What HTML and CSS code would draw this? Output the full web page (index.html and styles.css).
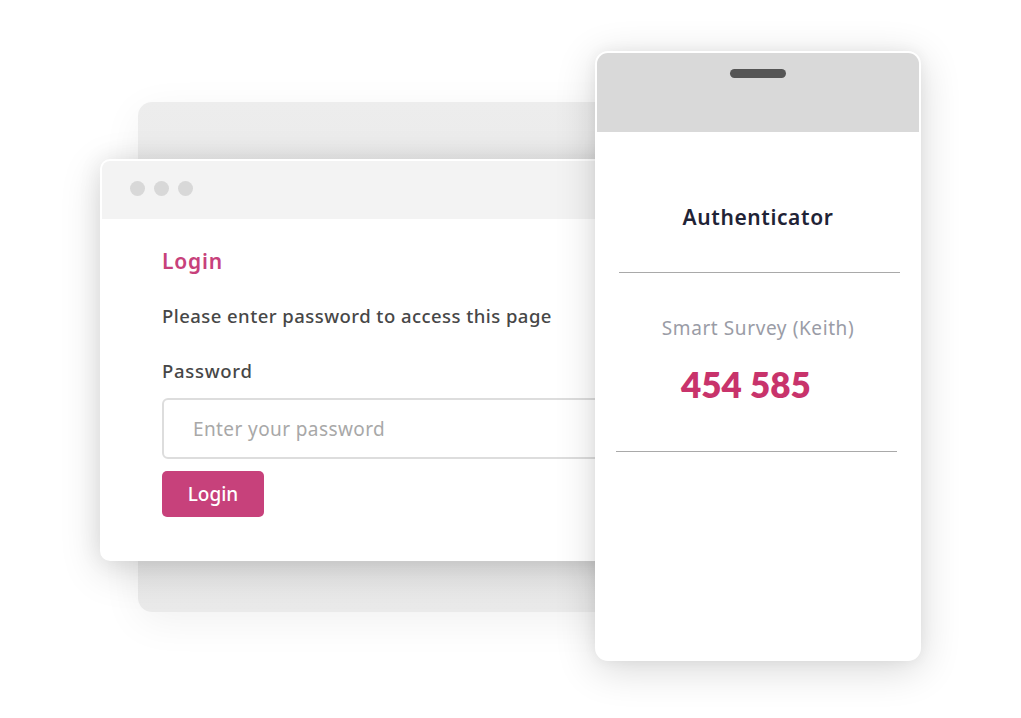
FILE: index.html
```html
<!DOCTYPE html>
<html>
<head>
<meta charset="utf-8">
<link rel="stylesheet" href="styles.css">
</head>
<body>
<div class="stage">
  <div class="back-card"></div>
  <div class="browser">
    <div class="browser-bar">
      <span class="dot"></span><span class="dot"></span><span class="dot"></span>
    </div>
    <div class="browser-body">
      <h1 class="login-title">Login</h1>
      <p class="prompt">Please enter password to access this page</p>
      <label class="field-label">Password</label>
      <div class="input">Enter your password</div>
      <div class="btn">Login</div>
    </div>
  </div>
  <div class="phone">
    <div class="phone-top"><span class="notch"></span></div>
    <div class="phone-body">
      <h2 class="auth-title">Authenticator</h2>
      <hr class="rule rule-a">
      <p class="account">Smart Survey (Keith)</p>
      <p class="code">454 585</p>
      <hr class="rule rule-b">
    </div>
  </div>
</div>
</body>
</html>
```

FILE: styles.css
```css
* { box-sizing: border-box; }
html, body { margin: 0; padding: 0; background: #ffffff; }
body { font-family: "Noto Sans", "Lato", sans-serif; }

.stage {
  position: relative;
  width: 1021px;
  height: 718px;
  overflow: hidden;
  background: #ffffff;
}

.back-card {
  position: absolute;
  left: 138px;
  top: 102px;
  width: 520px;
  height: 510px;
  border-radius: 14px;
  background: linear-gradient(180deg, #ededed 0%, #e6e6e6 50%, #eaeaea 100%);
  box-shadow: 0 10px 40px rgba(0,0,0,0.06);
}

.browser {
  position: absolute;
  left: 100px;
  top: 159px;
  width: 560px;
  height: 402px;
  background: #ffffff;
  border-radius: 10px;
  overflow: hidden;
  box-shadow: 0 10px 40px rgba(0,0,0,0.15), 0 0 24px rgba(0,0,0,0.07);
  border: 2px solid #ffffff;
}

.browser-bar {
  height: 58px;
  background: #f3f3f3;
  display: flex;
  align-items: center;
  gap: 9px;
  padding-left: 28px;
  padding-bottom: 4px;
}
.dot {
  width: 15px;
  height: 15px;
  border-radius: 50%;
  background: #d8d8d8;
}

.browser-body {
  padding: 28px 0 0 60px;
  display: flex;
  flex-direction: column;
  align-items: flex-start;
}
.login-title {
  margin: 0;
  font-size: 21px;
  font-weight: 600;
  letter-spacing: 0.8px;
  color: #c7417b;
  line-height: 28px;
}
.prompt {
  margin: 28px 0 0;
  font-size: 18.5px;
  letter-spacing: 0.45px;
  color: #474747;
  line-height: 26px;
  font-weight: 500;
}
.field-label {
  margin-top: 29px;
  font-size: 18.5px;
  letter-spacing: 0.7px;
  color: #474747;
  line-height: 26px;
  font-weight: 500;
}
.input {
  margin-top: 14px;
  width: 460px;
  height: 61px;
  border: 2px solid #dddddd;
  border-radius: 6px;
  padding-left: 29px;
  display: flex;
  align-items: center;
  font-size: 19px;
  letter-spacing: 0.4px;
  color: #a8a8a8;
}
.btn {
  margin-top: 12px;
  width: 102px;
  height: 46px;
  border-radius: 5px;
  background: #c7417b;
  color: #ffffff;
  font-size: 19px;
  font-weight: 500;
  display: flex;
  align-items: center;
  justify-content: center;
}

.phone {
  position: absolute;
  left: 595px;
  top: 51px;
  width: 326px;
  height: 610px;
  background: #ffffff;
  border: 2px solid #ffffff;
  border-radius: 13px;
  overflow: hidden;
  box-shadow: 0 8px 40px rgba(0,0,0,0.16), 0 0 14px rgba(0,0,0,0.05);
}
.phone-top {
  height: 79px;
  background: #d9d9d9;
  display: flex;
  justify-content: center;
  padding-top: 16px;
}
.notch {
  width: 56px;
  height: 9px;
  border-radius: 5px;
  background: #555555;
}
.phone-body {
  display: flex;
  flex-direction: column;
}
.auth-title {
  margin: 71px 0 0;
  text-align: center;
  font-size: 21px;
  font-weight: 600;
  letter-spacing: 0.6px;
  color: #1f2336;
  line-height: 28px;
}
.rule {
  border: 0;
  height: 1px;
  background: #a9a9a9;
  margin: 0;
}
.rule-a { margin: 41px 19px 0 22px; }
.rule-b { margin: 47px 22px 0 19px; }
.account {
  margin: 42px 0 0;
  text-align: center;
  font-size: 19px;
  letter-spacing: 0.6px;
  color: #9a9ca6;
  line-height: 26px;
}
.code {
  margin: 23px 0 0 84px;
  font-family: "Lato", sans-serif;
  font-size: 35px;
  font-weight: 800;
  color: #c8336b;
  line-height: 40px;
}
```
